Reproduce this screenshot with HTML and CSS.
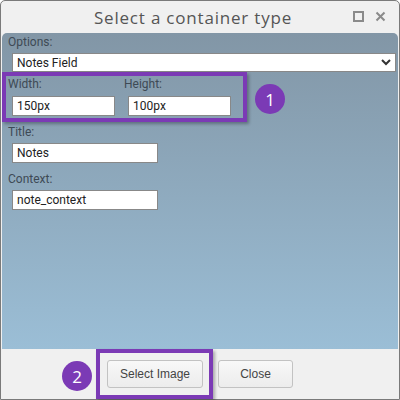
FILE: index.html
```html
<!DOCTYPE html>
<html lang="en">
<head>
  <meta charset="UTF-8">
  <title>Select a container type</title>
  <link rel="stylesheet" href="styles.css">
</head>
<body>
  <div class="dialog">
    <div class="titlebar">
      <span class="title">Select a container type</span>
      <span class="win-icons">
        <svg width="11" height="11" viewBox="0 0 11 11"><rect x="1" y="1" width="9" height="9" fill="none" stroke="#8a8a8a" stroke-width="2"/></svg>
        <svg width="11" height="11" viewBox="0 0 11 11"><path d="M1.5 1.5 L9.5 9.5 M9.5 1.5 L1.5 9.5" stroke="#8a8a8a" stroke-width="2"/></svg>
      </span>
    </div>
    <div class="content">
      <label class="lbl">Options:</label>
      <div class="select">
        <span>Notes Field</span>
        <svg width="10" height="7" viewBox="0 0 10 7"><path d="M1 1 L5 5 L9 1" fill="none" stroke="#333" stroke-width="2"/></svg>
      </div>
      <div class="row">
        <div class="field">
          <label class="lbl">Width:</label>
          <input class="inp w-small" type="text" value="150px">
        </div>
        <div class="field">
          <label class="lbl">Height:</label>
          <input class="inp w-small" type="text" value="100px">
        </div>
      </div>
      <label class="lbl">Title:</label>
      <input class="inp w-mid" type="text" value="Notes">
      <label class="lbl">Context:</label>
      <input class="inp w-mid" type="text" value="note_context">

      <!-- annotation -->
      <div class="mark mark-1"></div>
      <div class="badge badge-1">1</div>
    </div>
    <div class="footer">
      <button class="btn btn-wide">Select Image</button>
      <button class="btn">Close</button>
      <div class="mark mark-2"></div>
      <div class="badge badge-2">2</div>
    </div>
  </div>
</body>
</html>
```

FILE: styles.css
```css
body {
  margin: 0;
  font-family: Roboto, "Liberation Sans", sans-serif;
}
.dialog {
  width: 400px;
  height: 400px;
  box-sizing: border-box;
  border: 1px solid #7a7a7a;
  border-radius: 5px 5px 0 0;
  background: #f0f0f0;
  display: flex;
  flex-direction: column;
}
.titlebar {
  height: 32px;
  display: flex;
  align-items: center;
  justify-content: center;
  position: relative;
}
.title {
  font-family: "Open Sans", sans-serif;
  font-size: 17px;
  letter-spacing: 0.8px;
  color: #555;
  margin-left: -14px;
}
.win-icons {
  position: absolute;
  right: 13px;
  top: 10px;
  display: flex;
  gap: 11px;
}
.content {
  position: relative;
  flex: 1;
  margin: 0 1px;
  border-radius: 5px 5px 0 0;
  background: linear-gradient(#8296a6, #9bbed6);
  padding: 2px 2px 0 6px;
  display: flex;
  flex-direction: column;
  align-items: flex-start;
}
.lbl {
  font-size: 12px;
  color: #3e4a55;
  line-height: 14px;
  margin-bottom: 4px;
}
.select {
  box-sizing: border-box;
  width: 384px;
  height: 19px;
  margin-left: 4px;
  background: #fff;
  border: 1px solid #888;
  display: flex;
  align-items: center;
  justify-content: space-between;
  padding: 0 4px 0 4px;
  font-size: 12px;
  color: #222;
  margin-bottom: 5px;
}
.row {
  display: flex;
  gap: 9px;
}
.field {
  display: flex;
  flex-direction: column;
  align-items: flex-start;
}
.field .lbl {
  margin-bottom: 5px;
}
.inp {
  box-sizing: border-box;
  height: 20px;
  margin: 0 0 0 4px;
  padding: 0 4px;
  border: 1px solid #888;
  background: #fff;
  font-family: Roboto, sans-serif;
  font-size: 12px;
  color: #222;
  margin-bottom: 9px;
}
.w-small {
  width: 103px;
}
.w-mid {
  width: 146px;
}
.footer {
  position: relative;
  height: 50px;
  display: flex;
  align-items: center;
  padding-left: 106px;
  gap: 15px;
}
.btn {
  box-sizing: border-box;
  width: 75px;
  height: 28px;
  padding: 0;
  border: 1px solid #c2c2c2;
  border-radius: 3px;
  background: linear-gradient(#f8f8f8, #ececec);
  font-family: "Liberation Sans", Arial, sans-serif;
  font-size: 12px;
  color: #444;
}
.btn-wide {
  width: 96px;
}
.mark {
  position: absolute;
  border: 4px solid #7b3ab5;
  box-shadow: 2px 2px 3px rgba(0, 0, 0, 0.3);
}
.mark-1 {
  left: 0;
  top: 39px;
  width: 237px;
  height: 42px;
}
.mark-2 {
  left: 95px;
  top: 0;
  width: 109px;
  height: 42px;
}
.badge {
  position: absolute;
  width: 30px;
  height: 30px;
  border-radius: 50%;
  background: #7b3ab5;
  color: #fff;
  font-family: "Open Sans", sans-serif;
  font-size: 17px;
  display: flex;
  align-items: center;
  justify-content: center;
}
.badge-1 {
  left: 253px;
  top: 51px;
}
.badge-2 {
  left: 61px;
  top: 12px;
}
```
